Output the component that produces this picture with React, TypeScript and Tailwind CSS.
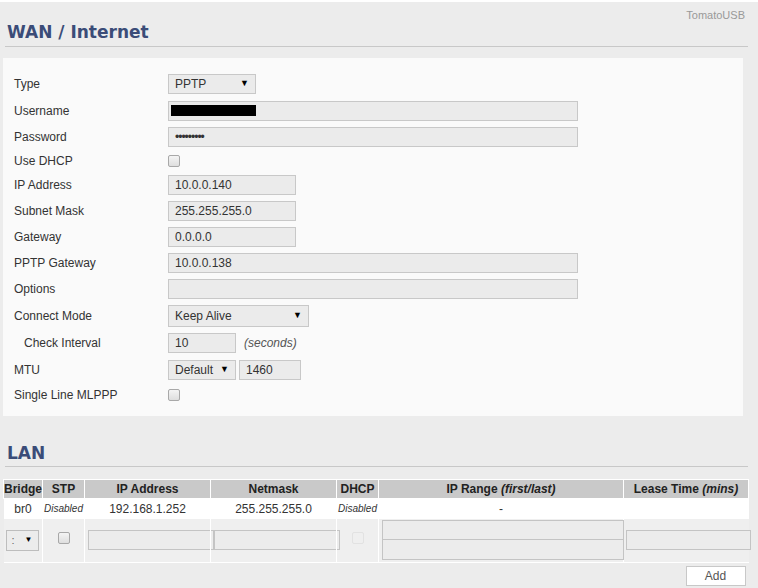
import React from 'react';

const font = { fontFamily: '"Liberation Sans", Arial, sans-serif' };
const titleFont = { fontFamily: '"DejaVu Sans", Verdana, sans-serif' };

function Field({ w, children, h = 'h-[20px]' }: { w: string; children?: React.ReactNode; h?: string }) {
  return (
    <div className={`${w} ${h} flex items-center border border-[#c8c8c8] bg-[#ebebeb] px-[6px] text-[12px] text-[#333]`}>
      {children}
    </div>
  );
}

function Select({ w, value, h = 'h-[20px]' }: { w: string; value: string; h?: string }) {
  return (
    <div className={`${w} ${h} flex items-center justify-between border border-[#c8c8c8] bg-[#ebebeb] pl-[6px] pr-[6px] text-[12px] text-[#333]`}>
      <span>{value}</span>
      <span className="text-[9px] text-black">▼</span>
    </div>
  );
}

function Check({ faint = false }: { faint?: boolean }) {
  return (
    <span
      className={`inline-block h-[12px] w-[12px] rounded-[2px] border ${
        faint ? 'border-[#e2e2e2] bg-[#efefef]' : 'border-[#a8a8a8] bg-gradient-to-b from-[#f4f4f4] to-[#dedede]'
      }`}
    />
  );
}

function Row({ label, h, indent = false, children }: { label: string; h: string; indent?: boolean; children?: React.ReactNode }) {
  return (
    <div className={`flex ${h} items-center`}>
      <div className={`w-[154px] text-[12px] text-[#333] ${indent ? 'pl-[10px]' : ''}`}>{label}</div>
      <div className="flex items-center gap-[3px]">{children}</div>
    </div>
  );
}

export default function App() {
  return (
    <div className="min-h-[588px] w-[758px] border-t-2 border-white bg-[#ececec]" style={font}>
      {/* header */}
      <div className="relative pt-[20px]">
        <span className="absolute right-[13px] top-[5px] text-[11px] text-[#999]">TomatoUSB</span>
        <h1 className="pl-[7px] text-[17px] font-bold leading-[20px] text-[#3b4c78]" style={titleFont}>
          WAN / Internet
        </h1>
        <div className="ml-[5px] mr-[10px] mt-[4px] h-px bg-[#c8c8c8]" />
      </div>

      {/* WAN panel */}
      <div className="ml-[3px] mt-[11px] w-[740px] bg-[#fafafa] pb-[10px] pl-[11px] pt-[13px]">
        <Row label="Type" h="h-[26px]">
          <Select w="w-[88px]" value="PPTP" />
        </Row>
        <Row label="Username" h="h-[27px]">
          <div className="flex h-[20px] w-[410px] items-center border border-[#c8c8c8] bg-[#ebebeb] pl-[2px]">
            <span className="h-[11px] w-[85px] bg-black" />
          </div>
        </Row>
        <Row label="Password" h="h-[25px]">
          <Field w="w-[410px]">
            <span className="text-[12px] tracking-[-1px]">•••••••••</span>
          </Field>
        </Row>
        <Row label="Use DHCP" h="h-[23px]">
          <Check />
        </Row>
        <Row label="IP Address" h="h-[26px]">
          <Field w="w-[128px]">10.0.0.140</Field>
        </Row>
        <Row label="Subnet Mask" h="h-[26px]">
          <Field w="w-[128px]">255.255.255.0</Field>
        </Row>
        <Row label="Gateway" h="h-[26px]">
          <Field w="w-[128px]">0.0.0.0</Field>
        </Row>
        <Row label="PPTP Gateway" h="h-[26px]">
          <Field w="w-[410px]">10.0.0.138</Field>
        </Row>
        <Row label="Options" h="h-[26px]">
          <Field w="w-[410px]" />
        </Row>
        <Row label="Connect Mode" h="h-[28px]">
          <Select w="w-[141px]" h="h-[22px]" value="Keep Alive" />
        </Row>
        <Row label="Check Interval" h="h-[26px]" indent>
          <Field w="w-[68px]">10</Field>
          <span className="ml-[5px] text-[12px] italic text-[#555]">(seconds)</span>
        </Row>
        <Row label="MTU" h="h-[28px]">
          <Select w="w-[68px]" value="Default" />
          <Field w="w-[62px]">1460</Field>
        </Row>
        <Row label="Single Line MLPPP" h="h-[22px]">
          <Check />
        </Row>
      </div>

      {/* LAN */}
      <h2 className="mt-[27px] pl-[7px] text-[17px] font-bold leading-[20px] text-[#3b4c78]" style={titleFont}>
        LAN
      </h2>
      <div className="ml-[5px] mr-[10px] mt-[3px] h-px bg-[#c8c8c8]" />

      <table className="ml-[3px] mt-[12px] w-[745px] table-fixed border-collapse text-[12px] text-[#333]">
        <colgroup>
          <col className="w-[39px]" />
          <col className="w-[42px]" />
          <col className="w-[126px]" />
          <col className="w-[126px]" />
          <col className="w-[42px]" />
          <col className="w-[245px]" />
          <col className="w-[125px]" />
        </colgroup>
        <thead>
          <tr className="h-[17px] bg-[#c9c9c9] text-[12px] font-bold text-[#222]">
            <th className="border border-white p-0">Bridge</th>
            <th className="border border-white p-0">STP</th>
            <th className="border border-white p-0">IP Address</th>
            <th className="border border-white p-0">Netmask</th>
            <th className="border border-white p-0">DHCP</th>
            <th className="border border-white p-0">
              IP Range <i>(first/last)</i>
            </th>
            <th className="border border-white p-0">
              Lease Time <i>(mins)</i>
            </th>
          </tr>
        </thead>
        <tbody>
          <tr className="h-[20px] bg-white text-center">
            <td className="p-0">br0</td>
            <td className="p-0 text-[10px] italic">Disabled</td>
            <td className="p-0">192.168.1.252</td>
            <td className="p-0">255.255.255.0</td>
            <td className="p-0 text-[10px] italic">Disabled</td>
            <td className="p-0">-</td>
            <td className="p-0" />
          </tr>
          <tr className="h-[44px] bg-[#efefef]">
            <td className="border-r border-white p-0 pl-[2px]">
              <div className="flex h-[21px] w-[33px] items-center justify-between border border-[#bdbdbd] bg-[#ececec] px-[5px] text-[11px]">
                <span className="text-[#666]">:</span>
                <span className="text-[8px] text-black">▼</span>
              </div>
            </td>
            <td className="border-r border-white p-0 text-center">
              <Check />
            </td>
            <td className="overflow-visible border-r border-white p-0 pl-[3px]">
              <div className="h-[20px] w-[126px] border border-[#c4c4c4] bg-[#ececec]" />
            </td>
            <td className="overflow-visible border-r border-white p-0 pl-[3px]">
              <div className="h-[20px] w-[126px] border border-[#c4c4c4] bg-[#ececec]" />
            </td>
            <td className="border-r border-white p-0 text-center">
              <Check faint />
            </td>
            <td className="border-r border-white p-0 pl-[3px]">
              <div className="flex flex-col">
                <div className="h-[20px] w-[242px] border border-[#c4c4c4] bg-[#ececec]" />
                <div className="h-[20px] w-[242px] border border-t-0 border-[#c4c4c4] bg-[#ececec]" />
              </div>
            </td>
            <td className="overflow-visible p-0 pl-[2px]">
              <div className="h-[20px] w-[125px] border border-[#c4c4c4] bg-[#ececec]" />
            </td>
          </tr>
          <tr className="h-[26px] border-y border-white bg-[#ececec]">
            <td colSpan={7} className="p-0 pr-[3px] text-right">
              <button className="h-[20px] w-[60px] border border-[#c8c8c8] bg-white text-[12px] text-[#555]">
                Add
              </button>
            </td>
          </tr>
        </tbody>
      </table>
    </div>
  );
}
